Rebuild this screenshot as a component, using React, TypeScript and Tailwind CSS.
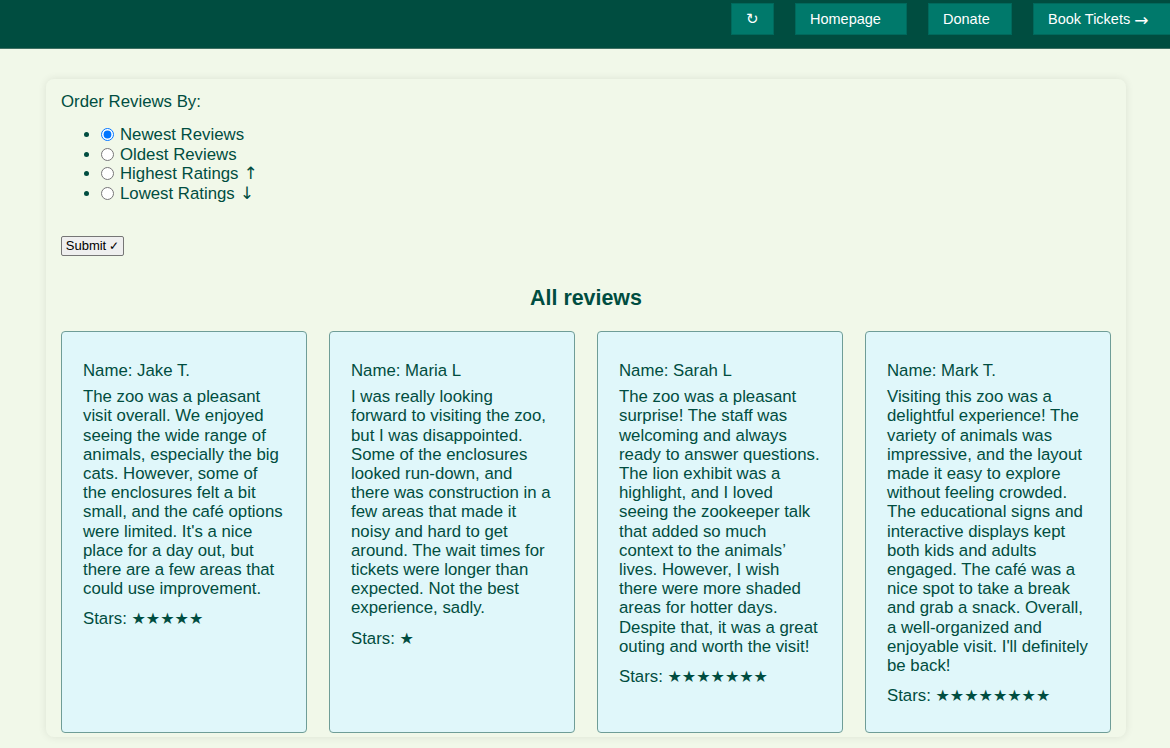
import React from "react";

const reviews = [
  {
    name: "Jake T.",
    text: "The zoo was a pleasant visit overall. We enjoyed seeing the wide range of animals, especially the big cats. However, some of the enclosures felt a bit small, and the café options were limited. It's a nice place for a day out, but there are a few areas that could use improvement.",
    stars: 5,
  },
  {
    name: "Maria L",
    text: "I was really looking forward to visiting the zoo, but I was disappointed. Some of the enclosures looked run-down, and there was construction in a few areas that made it noisy and hard to get around. The wait times for tickets were longer than expected. Not the best experience, sadly.",
    stars: 1,
  },
  {
    name: "Sarah L",
    text: "The zoo was a pleasant surprise! The staff was welcoming and always ready to answer questions. The lion exhibit was a highlight, and I loved seeing the zookeeper talk that added so much context to the animals\u2019 lives. However, I wish there were more shaded areas for hotter days. Despite that, it was a great outing and worth the visit!",
    stars: 7,
  },
  {
    name: "Mark T.",
    text: "Visiting this zoo was a delightful experience! The variety of animals was impressive, and the layout made it easy to explore without feeling crowded. The educational signs and interactive displays kept both kids and adults engaged. The café was a nice spot to take a break and grab a snack. Overall, a well-organized and enjoyable visit. I'll definitely be back!",
    stars: 8,
  },
];

const options: { label: string; arrow?: string }[] = [
  { label: "Newest Reviews" },
  { label: "Oldest Reviews" },
  { label: "Highest Ratings", arrow: "\u2191" },
  { label: "Lowest Ratings", arrow: "\u2193" },
];

export default function App() {
  return (
    <div className="min-h-screen bg-[#f1f8e9] text-[#004d40] font-['Liberation_Sans',Arial,sans-serif]">
      <nav className="h-[49px] bg-[#004d40] border-b border-[#3f6f63] overflow-hidden">
        <div className="flex justify-end items-start pt-[3px] gap-[21px] -mr-[12px] text-white text-[14.5px]">
          <button className="w-[43px] h-[32px] flex items-center justify-center pt-[1px] bg-[#00796b] border border-[#00695c] text-white">
            ↻
          </button>
          <button className="w-[112px] h-[32px] flex items-center pl-[14px] pt-[1px] bg-[#00796b] border border-[#00695c] text-white">
            Homepage
          </button>
          <button className="w-[84px] h-[32px] flex items-center pl-[14px] pt-[1px] bg-[#00796b] border border-[#00695c] text-white">
            Donate
          </button>
          <button className="w-[149px] h-[32px] flex items-center pl-[14px] pt-[1px] bg-[#00796b] border border-[#00695c] text-white">
            Book Tickets <span className="ml-[4px] font-['DejaVu_Sans',sans-serif] text-[17px] leading-[16px]">→</span>
          </button>
        </div>
      </nav>

      <main className="ml-[46px] mt-[30px] w-[1080px] rounded-[8px] bg-[#f1f8e9] shadow-[0_0_8px_rgba(0,0,0,0.09)] px-[15px] pt-[13px] pb-[4px]">
        <form>
          <p className="text-[16.8px] leading-[19px]">Order Reviews By:</p>
          <ul className="mt-[14px] pl-[40px] list-disc text-[16.8px] leading-[19.5px]">
            {options.map((o, i) => (
              <li key={o.label} className="h-[19.5px] marker:text-[#004d40]">
                <label className="inline-flex items-center h-[19.5px] align-top">
                  <input
                    type="radio"
                    name="order"
                    defaultChecked={i === 0}
                    className="w-[13px] h-[13px] m-0 mr-[6px]"
                  />
                  <span>{o.label}</span>
                  {o.arrow && (
                    <span className="ml-[5px] font-['DejaVu_Sans',sans-serif] text-[17px] leading-[19.5px]">
                      {o.arrow}
                    </span>
                  )}
                </label>
              </li>
            ))}
          </ul>
          <button
            type="button"
            className="mt-[33px] h-[20px] w-[63px] flex items-center justify-center bg-[#efefef] border border-[#767676] rounded-[2px] text-black text-[13px] leading-[16px]"
          >
            Submit <span className="ml-[3px] font-['DejaVu_Sans',sans-serif] text-[12px] font-light">✓</span>
          </button>
        </form>

        <h2 className="mt-[30px] text-center font-bold text-[21.4px] leading-[25px]">
          All reviews
        </h2>

        <div className="mt-[20px] grid grid-cols-4 gap-[22px]">
          {reviews.map((r) => (
            <div
              key={r.name}
              className="h-[402px] bg-[#e0f7fa] border border-[#6f9d97] rounded-[4px] px-[21px] pt-[29px] pb-[28px] text-[16.8px] leading-[19.2px]"
            >
              <p>Name: {r.name}</p>
              <p className="mt-[7px]">{r.text}</p>
              <p className="mt-[11px]">
                Stars: <span className="font-['DejaVu_Sans',sans-serif] text-[16px]">{"★".repeat(r.stars)}</span>
              </p>
            </div>
          ))}
        </div>
      </main>
    </div>
  );
}
